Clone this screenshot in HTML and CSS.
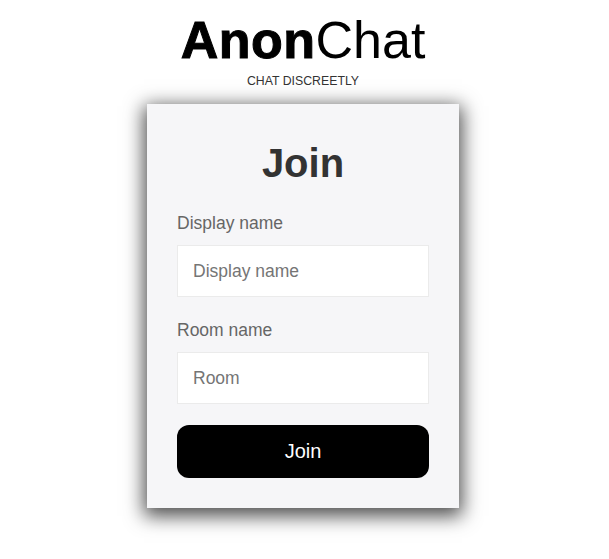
FILE: index.html
```html
<!DOCTYPE html>
<html>
<head>
<meta charset="utf-8">
<link rel="stylesheet" href="styles.css">
</head>
<body>
<header class="brand">
  <h1 class="logo"><span class="logo-bold">Anon</span>Chat</h1>
  <p class="tagline">CHAT DISCREETLY</p>
</header>
<main class="card">
  <h2 class="card-title">Join</h2>
  <form class="form">
    <label class="field">
      <span class="field-label">Display name</span>
      <input class="field-input" type="text" placeholder="Display name">
    </label>
    <label class="field">
      <span class="field-label">Room name</span>
      <input class="field-input" type="text" placeholder="Room">
    </label>
    <button class="btn" type="button">Join</button>
  </form>
</main>
</body>
</html>
```
FILE: styles.css
```css
* { box-sizing: border-box; }
body {
  margin: 0;
  padding: 0 3px 40px 0;
  background: #fff;
  font-family: "Liberation Sans", Arial, sans-serif;
  display: flex;
  flex-direction: column;
  align-items: center;
}
.brand { text-align: center; }
.logo {
  margin: 12px 0 0;
  font-size: 52px;
  font-weight: 400;
  line-height: 56px;
  color: #000;
}
.logo-bold {
  font-weight: 700;
  -webkit-text-stroke: 1px #000;
  letter-spacing: 0.5px;
}
.tagline {
  margin: 6px 0 0;
  font-size: 12.3px;
  line-height: 14px;
  color: #333;
}
.card {
  margin-top: 16px;
  width: 312px;
  background: #f6f6f8;
  padding: 37px 30px 30px;
  box-shadow: 0 5px 18px 3px rgba(0,0,0,0.7);
}
.card-title {
  margin: 0;
  text-align: center;
  font-size: 40px;
  line-height: 44px;
  font-weight: 700;
  color: #333;
}
.form { margin-top: 28px; display: flex; flex-direction: column; }
.field { display: flex; flex-direction: column; margin-bottom: 23px; }
.field-label {
  font-size: 17.5px;
  line-height: 20px;
  color: #666;
  margin-bottom: 12px;
}
.field-input {
  height: 52px;
  border: 1px solid #ebebeb;
  background: #fff;
  padding: 0 15px;
  font-family: inherit;
  font-size: 17.5px;
  color: #333;
  outline: none;
}
.field-input::placeholder { color: #757575; }
.btn {
  margin-top: -2px;
  height: 53px;
  border: none;
  border-radius: 12px;
  background: #000;
  color: #fff;
  font-family: inherit;
  font-size: 20px;
}
```
